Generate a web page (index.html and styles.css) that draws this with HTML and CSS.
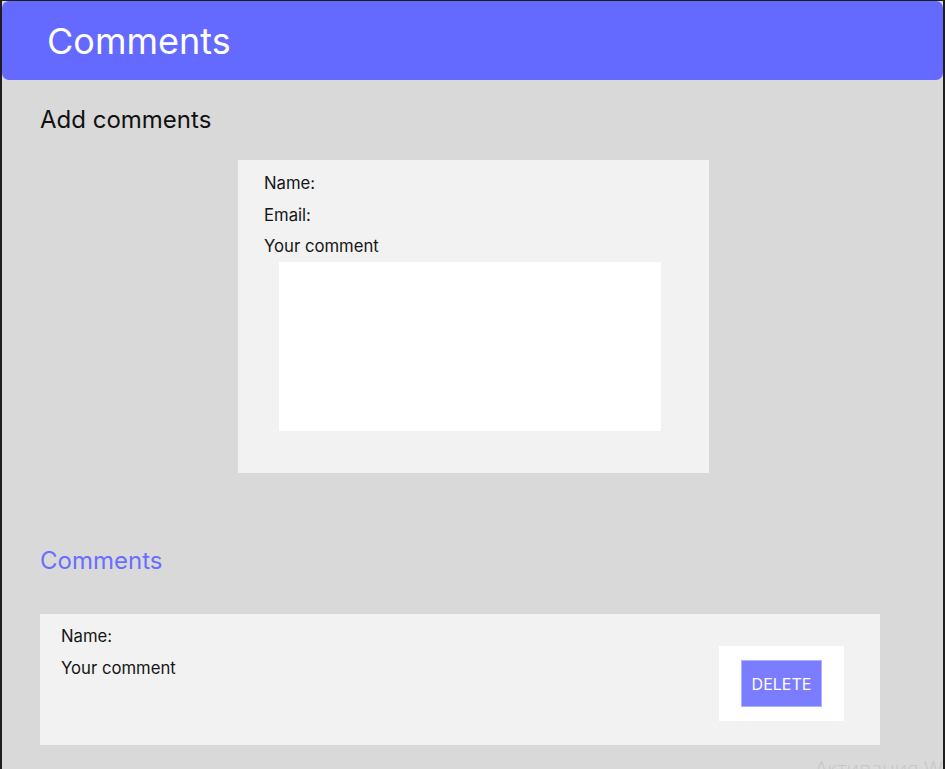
FILE: index.html
```html
<!DOCTYPE html>
<html lang="en">
<head>
<meta charset="utf-8">
<title>Comments</title>
<link rel="stylesheet" href="styles.css">
</head>
<body>
<div class="frame">
  <header class="header">
    <h1 class="title">Comments</h1>
  </header>
  <main class="content">
    <h2 class="section-title">Add comments</h2>
    <form class="form-card">
      <label class="field-label">Name:</label>
      <label class="field-label">Email:</label>
      <label class="field-label">Your comment</label>
      <textarea class="comment-input"></textarea>
    </form>
    <h2 class="section-title accent">Comments</h2>
    <div class="comment-card">
      <div class="comment-text">
        <div class="field-label">Name:</div>
        <div class="field-label">Your comment</div>
      </div>
      <div class="delete-box">
        <button class="delete-btn" type="button">DELETE</button>
      </div>
    </div>
  </main>
  <div class="watermark">Активация Windows</div>
</div>
</body>
</html>
```
FILE: styles.css
```css
html, body {
  margin: 0;
  padding: 0;
  background: #1e1e1e;
  height: 100%;
  overflow: hidden;
}

.frame {
  position: relative;
  margin: 1px 2px 0 2px;
  height: 768px;
  background: #d9d9d9;
  overflow: hidden;
  font-family: Inter, "Liberation Sans", sans-serif;
  color: #111;
}

.header {
  height: 79px;
  background: #646aff;
  border-radius: 7px;
  display: flex;
  align-items: center;
  padding-left: 45px;
}

.title {
  margin: 0;
  font-size: 36px;
  font-weight: 400;
  line-height: 44px;
  color: #fff;
}

.content {
  padding: 25px 0 0 38px;
}

.section-title {
  margin: 0;
  font-size: 24px;
  font-weight: 400;
  line-height: 29px;
  color: #111;
}

.section-title.accent {
  color: #6a6eff;
  margin-top: 73px;
}

.form-card {
  box-sizing: border-box;
  width: 471px;
  height: 313px;
  margin: 26px 0 0 198px;
  background: #f2f2f2;
  padding: 13px 0 0 26px;
  display: flex;
  flex-direction: column;
  align-items: flex-start;
}

.field-label {
  display: block;
  font-size: 16.7px;
  line-height: 20px;
  margin-bottom: 11.5px;
  color: #151515;
}

.form-card .field-label:nth-of-type(3) {
  margin-bottom: 6px;
}

.comment-input {
  display: block;
  box-sizing: border-box;
  width: 382px;
  height: 169px;
  margin-left: 15px;
  border: 0;
  padding: 0;
  background: #fff;
  resize: none;
  outline: none;
}

.comment-card {
  box-sizing: border-box;
  width: 840px;
  height: 131px;
  margin-top: 39px;
  background: #f2f2f2;
  padding: 12px 36px 24px 21px;
  display: flex;
  justify-content: space-between;
  align-items: flex-start;
}

.delete-box {
  margin-top: 20px;
  background: #fff;
  padding: 14px 22px;
  display: flex;
}

.delete-btn {
  box-sizing: border-box;
  width: 81px;
  height: 47px;
  background: #7a7dff;
  border: 1px solid #aeb0ff;
  color: #fff;
  font-family: Inter, "Liberation Sans", sans-serif;
  font-size: 16px;
  padding: 0;
}

.watermark {
  position: absolute;
  left: 813px;
  top: 754px;
  font-size: 21px;
  line-height: 26px;
  font-weight: 300;
  color: #c6c6c6;
  white-space: nowrap;
  font-family: "Open Sans", sans-serif;
}
```
